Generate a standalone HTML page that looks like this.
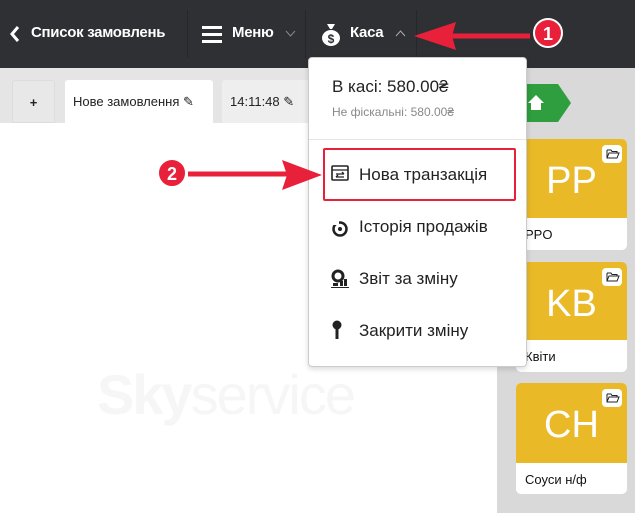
<!DOCTYPE html><html><head><meta charset="utf-8"><style>
*{margin:0;padding:0;box-sizing:border-box}
body{width:635px;height:513px;overflow:hidden;position:relative;background:#fff;font-family:"Liberation Sans",sans-serif;color:#222}
.hdr{position:absolute;left:0;top:0;width:635px;height:68px;background:#2f3034;color:#fff}
.hdr .t{position:absolute;top:24px;font-size:15px;font-weight:bold;letter-spacing:-0.3px}
.sep{position:absolute;top:10px;width:1px;height:48px;background:#26272a}
.bar{position:absolute;left:0;top:68px;width:497px;height:55px;background:#e5e5e5}
.tab{position:absolute;top:80px;height:43px;background:#fff;border-radius:3px 3px 0 0;font-size:13px;padding-top:14px}
.right{position:absolute;left:497px;top:68px;width:138px;height:445px;background:#d9d9d9}
.card{position:absolute;left:516px;width:111px;background:#fff;border-radius:5px;overflow:hidden}
.card .y{background:#e9b928;color:#fff;font-size:38px;text-align:center;position:relative}
.card .n{font-size:13px;padding:9px 0 0 9px;color:#111}
.fold{position:absolute;right:5px;top:6px;width:20px;height:18px;background:#fff;border-radius:4px;line-height:0}
.fold svg{display:block}
.dd{position:absolute;left:308px;top:57px;width:219px;height:310px;background:#fff;border:1px solid #ccc;border-radius:4px;box-shadow:0 2px 6px rgba(0,0,0,.15)}
.it{position:absolute;left:50px;font-size:17px;color:#222}
.ic{position:absolute;left:22px}
</style></head><body>
<div class="hdr">
<svg style="position:absolute;left:9px;top:25px" width="12" height="18"><path d="M9 2 L3 9 L9 16" stroke="#fff" stroke-width="3" fill="none"/></svg>
<div class="t" style="left:31px">Список замовлень</div>
<div class="sep" style="left:187px"></div>
<svg style="position:absolute;left:202px;top:25px" width="20" height="18"><rect y="1" width="20" height="3" fill="#fff"/><rect y="8" width="20" height="3" fill="#fff"/><rect y="15" width="20" height="3" fill="#fff"/></svg>
<div class="t" style="left:232px">Меню</div>
<svg style="position:absolute;left:285px;top:30px" width="11" height="8"><path d="M1 1L5.5 6L10 1" stroke="#888" fill="none"/></svg>
<div class="sep" style="left:305px"></div>
<svg style="position:absolute;left:320px;top:22px" width="22" height="24"><path d="M7 2h8l-3 5h-2z" fill="#fff"/><ellipse cx="11" cy="16" rx="9" ry="8" fill="#fff"/><text x="11" y="21" font-size="12" font-weight="bold" fill="#2f3034" text-anchor="middle" font-family="Liberation Sans">$</text></svg>
<div class="t" style="left:350px">Каса</div>
<svg style="position:absolute;left:395px;top:30px" width="11" height="8"><path d="M1 6L5.5 1L10 6" stroke="#aaa" fill="none"/></svg>
<div class="sep" style="left:416px"></div>
</div>
<div class="bar"></div>
<div class="tab" style="left:12px;width:43px;background:#e8e8e8;text-align:center;font-weight:bold;border:1px solid #ddd">+</div>
<div class="tab" style="left:65px;width:148px;padding-left:8px">Нове замовлення ✎</div>
<div class="tab" style="left:222px;width:90px;padding-left:8px;background:#eee">14:11:48 ✎</div>
<div style="position:absolute;left:97px;top:362px;font-size:56px;color:#f6f6f6;letter-spacing:-2px"><b>Sky</b>service</div>
<div class="right"></div>
<svg style="position:absolute;left:518px;top:84px" width="54" height="38"><path d="M0 0H40L53 19L40 38H0z" fill="#2e9e3e"/><path d="M10 19L18 11L26 19H23V26H13V19z" fill="#fff"/></svg>
<div class="card" style="top:139px;height:111px"><div class="y" style="height:79px;line-height:84px">PP<div class="fold"><svg width="20" height="18"><path d="M5 5h4l1 1.5h5v2M5 5v8h10l2-5H7l-2 5" stroke="#222" fill="none"/></svg></div></div><div class="n">PPO</div></div>
<div class="card" style="top:262px;height:110px"><div class="y" style="height:78px;line-height:84px">KB<div class="fold"><svg width="20" height="18"><path d="M5 5h4l1 1.5h5v2M5 5v8h10l2-5H7l-2 5" stroke="#222" fill="none"/></svg></div></div><div class="n">Квіти</div></div>
<div class="card" style="top:383px;height:111px"><div class="y" style="height:80px;line-height:84px">CH<div class="fold"><svg width="20" height="18"><path d="M5 5h4l1 1.5h5v2M5 5v8h10l2-5H7l-2 5" stroke="#222" fill="none"/></svg></div></div><div class="n">Соуси н/ф</div></div>
<div class="dd">
<div style="position:absolute;left:23px;top:19px;font-size:17px">В касі: 580.00₴</div>
<div style="position:absolute;left:23px;top:47px;font-size:12px;color:#888">Не фіскальні: 580.00₴</div>
<div style="position:absolute;left:0;top:81px;width:217px;height:1px;background:#e5e5e5"></div>
<div style="position:absolute;left:14px;top:90px;width:193px;height:53px;border:2px solid #e8203a;border-radius:2px"></div>
<svg class="ic" style="top:107px" width="18" height="17"><rect x="1" y="1" width="16" height="14" rx="1" stroke="#222" stroke-width="1.6" fill="none"/><path d="M1 5H17M5 9H13M11 7l2 2M5 12H13M7 10l-2 2" stroke="#222" stroke-width="1.3" fill="none"/></svg>
<div class="it" style="top:107px">Нова транзакція</div>
<svg class="ic" style="top:161px" width="18" height="18"><circle cx="9" cy="10" r="6.5" stroke="#222" stroke-width="2.5" fill="none"/><circle cx="9" cy="10" r="2" fill="#222"/><rect x="1" y="1" width="7" height="5" fill="#fff"/></svg>
<div class="it" style="top:159px">Історія продажів</div>
<svg class="ic" style="top:211px" width="19" height="19"><circle cx="7" cy="7" r="5" stroke="#222" stroke-width="3" fill="none"/><rect x="9" y="12" width="3" height="5" fill="#222"/><rect x="13" y="10" width="3" height="7" fill="#222"/><rect x="2" y="14" width="5" height="3" fill="#222"/><rect x="0" y="18" width="18" height="1" fill="#222"/></svg>
<div class="it" style="top:211px">Звіт за зміну</div>
<svg class="ic" style="top:262px" width="14" height="20"><circle cx="6" cy="5" r="4.5" fill="#222"/><rect x="4.5" y="8" width="3" height="11" fill="#222"/></svg>
<div class="it" style="top:263px">Закрити зміну</div>
</div>
<svg style="position:absolute;left:0;top:0" width="635" height="513">
<path d="M530 36H450" stroke="#e8203a" stroke-width="5"/><path d="M414 36L456 22L452 36L456 50z" fill="#e8203a"/>
<circle cx="548" cy="33" r="14" fill="#e8203a" stroke="#fff" stroke-width="2"/><text x="548" y="40" font-size="18" font-weight="bold" fill="#fff" text-anchor="middle" font-family="Liberation Sans">1</text>
<path d="M188 174H290" stroke="#e8203a" stroke-width="5"/><path d="M322 175L282 160L287 175L282 190z" fill="#e8203a"/>
<circle cx="172" cy="173" r="14" fill="#e8203a" stroke="#fff" stroke-width="2"/><text x="172" y="180" font-size="18" font-weight="bold" fill="#fff" text-anchor="middle" font-family="Liberation Sans">2</text>
</svg>
</body></html>
